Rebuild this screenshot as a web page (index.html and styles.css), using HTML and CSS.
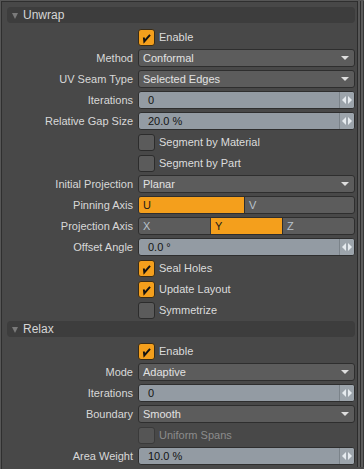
FILE: index.html
```html
<!DOCTYPE html>
<html>
<head>
    <title>Unwrap Properties</title>
    <link rel="stylesheet" href="styles.css">
</head>
<body>
    <div class="frame">
        <div class="panel">
            <div class="section">
                <div class="section-head"><span class="tri"></span>Unwrap</div>

                <span class="label"></span>
                <div class="check on"><span class="box"><svg viewBox="0 0 17 17"><path d="M5.5 8.5 L6 13 L12.5 5.5" /></svg></span>Enable</div>

                <span class="label">Method</span>
                <div class="dropdown">Conformal<span class="arrow"></span></div>

                <span class="label">UV Seam Type</span>
                <div class="dropdown">Selected Edges<span class="arrow"></span></div>

                <span class="label">Iterations</span>
                <div class="number"><span class="value">0</span><span class="handle"><i class="l"></i><i class="r"></i></span></div>

                <span class="label">Relative Gap Size</span>
                <div class="number"><span class="value">20.0 %</span><span class="handle"><i class="l"></i><i class="r"></i></span></div>

                <span class="label"></span>
                <div class="check"><span class="box"></span>Segment by Material</div>

                <span class="label"></span>
                <div class="check"><span class="box"></span>Segment by Part</div>

                <span class="label">Initial Projection</span>
                <div class="dropdown">Planar<span class="arrow"></span></div>

                <span class="label">Pinning Axis</span>
                <div class="segments two">
                    <span class="seg active">U</span>
                    <span class="seg">V</span>
                </div>

                <span class="label">Projection Axis</span>
                <div class="segments three">
                    <span class="seg">X</span>
                    <span class="seg active">Y</span>
                    <span class="seg">Z</span>
                </div>

                <span class="label">Offset Angle</span>
                <div class="number"><span class="value">0.0 °</span><span class="handle"><i class="l"></i><i class="r"></i></span></div>

                <span class="label"></span>
                <div class="check on"><span class="box"><svg viewBox="0 0 17 17"><path d="M5.5 8.5 L6 13 L12.5 5.5" /></svg></span>Seal Holes</div>

                <span class="label"></span>
                <div class="check on"><span class="box"><svg viewBox="0 0 17 17"><path d="M5.5 8.5 L6 13 L12.5 5.5" /></svg></span>Update Layout</div>

                <span class="label"></span>
                <div class="check"><span class="box"></span>Symmetrize</div>
            </div>

            <div class="section">
                <div class="section-head"><span class="tri"></span>Relax</div>

                <span class="label"></span>
                <div class="check on"><span class="box"><svg viewBox="0 0 17 17"><path d="M5.5 8.5 L6 13 L12.5 5.5" /></svg></span>Enable</div>

                <span class="label">Mode</span>
                <div class="dropdown">Adaptive<span class="arrow"></span></div>

                <span class="label">Iterations</span>
                <div class="number"><span class="value">0</span><span class="handle"><i class="l"></i><i class="r"></i></span></div>

                <span class="label">Boundary</span>
                <div class="dropdown">Smooth<span class="arrow"></span></div>

                <span class="label"></span>
                <div class="check disabled"><span class="box"></span>Uniform Spans</div>

                <span class="label">Area Weight</span>
                <div class="number"><span class="value">10.0 %</span><span class="handle"><i class="l"></i><i class="r"></i></span></div>
            </div>
        </div>
        <div class="scroll"></div>
    </div>
</body>
</html>
```

FILE: styles.css
```css
body {
    margin: 0;
    background-color: #4a4a4a;
    font-family: "Liberation Sans", Arial, sans-serif;
    font-size: 11px;
    color: #dcdcdc;
}

.frame {
    display: flex;
    height: 469px;
    box-sizing: border-box;
    border-top: 1px solid #565656;
    border-left: 1px solid #565656;
}

.panel {
    flex: 1;
    border-top: 1px solid #2f2f2f;
    border-left: 1px solid #2f2f2f;
    border-bottom: 1px solid #2f2f2f;
    height: 465px;
    padding: 5px 0 0 5px;
    background-color: #484848;
}

.scroll {
    width: 7px;
    height: 466px;
    background: linear-gradient(to right,
        #2b2b2b 0, #2b2b2b 1px,
        #585858 1px, #585858 3px,
        #2e2e2e 3px, #2e2e2e 4px,
        #5c5c5c 4px, #5c5c5c 6px,
        #363636 6px);
}

.section {
    display: grid;
    grid-template-columns: 126px 217px;
    column-gap: 5px;
    row-gap: 3px;
    margin-bottom: 2px;
}

.section-head {
    grid-column: span 2;
    height: 16px;
    line-height: 16px;
    background-color: #3d3d3d;
    border-radius: 4px;
    font-size: 12px;
    color: #d6d6d6;
    display: flex;
    align-items: center;
    margin-bottom: 2px;
}

.tri {
    width: 0;
    height: 0;
    border-left: 3.5px solid transparent;
    border-right: 3.5px solid transparent;
    border-top: 6px solid #7a7a7a;
    margin: 1px 5px 0 5px;
}

.label {
    height: 18px;
    line-height: 18px;
    text-align: right;
    white-space: nowrap;
    color: #d8d8d8;
}

.check {
    height: 18px;
    display: flex;
    align-items: center;
    gap: 4px;
    color: #dcdcdc;
}

.check .box {
    width: 15px;
    height: 15px;
    border: 1px solid #2c2c2c;
    border-radius: 3px;
    background-color: #5b5b5b;
    display: flex;
}

.check.on .box {
    background-color: #f49f1c;
    border-color: #3a2c16;
}

.check svg {
    width: 15px;
    height: 15px;
}

.check path {
    fill: none;
    stroke: #111;
    stroke-width: 2.2;
    stroke-linejoin: miter;
}

.check.disabled {
    color: #8c8c8c;
}

.check.disabled .box {
    background-color: #555;
    border-color: #3a3a3a;
}

.dropdown {
    height: 16px;
    line-height: 16px;
    border: 1px solid #2e2e2e;
    border-radius: 3px;
    background-color: #5c5c5c;
    padding-left: 4px;
    position: relative;
    color: #e2e2e2;
}

.arrow {
    position: absolute;
    right: 5px;
    top: 6px;
    width: 0;
    height: 0;
    border-left: 4px solid transparent;
    border-right: 4px solid transparent;
    border-top: 4px solid #dedede;
}

.number {
    height: 16px;
    border: 1px solid #2e2e2e;
    border-radius: 3px;
    background-color: #939ba3;
    display: flex;
    overflow: hidden;
    color: #141414;
}

.number .value {
    flex: 1;
    line-height: 16px;
    padding-left: 9px;
}

.number .handle {
    width: 14px;
    border-left: 1px solid #7b838a;
    background-color: #9ca4ab;
    display: flex;
    align-items: center;
    justify-content: center;
    gap: 1px;
}

.handle i {
    width: 0;
    height: 0;
    border-top: 4px solid transparent;
    border-bottom: 4px solid transparent;
}

.handle .l {
    border-right: 4px solid #e6ebef;
    margin-right: 1px;
}

.handle .r {
    border-left: 4px solid #e6ebef;
    padding-left: 0;
}

.segments {
    height: 16px;
    border: 1px solid #2e2e2e;
    border-radius: 3px;
    background-color: #5c5c5c;
    display: grid;
    overflow: hidden;
}

.segments.two {
    grid-template-columns: 106px 1fr;
}

.segments.three {
    grid-template-columns: 72px 72px 1fr;
}

.seg {
    line-height: 16px;
    padding-left: 4px;
    color: #b9c3cc;
    border-right: 1px solid #3a3a3a;
}

.seg:last-child {
    border-right: none;
}

.seg.active {
    background-color: #f49f1c;
    color: #1a1a1a;
    border-right-color: #2e2e2e;
}
```
